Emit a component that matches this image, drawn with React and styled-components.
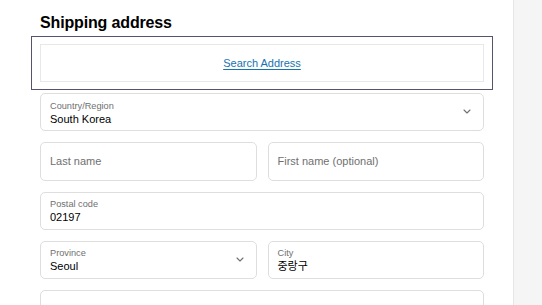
import React from 'react';
import styled, { createGlobalStyle } from 'styled-components';

const GlobalStyle = createGlobalStyle`
    html, body {
        margin: 0;
        padding: 0;
        background: #ffffff;
    }
    body {
        font-family: "Liberation Sans", Arial, "Noto Sans CJK KR", sans-serif;
        color: #000000;
    }
`;

const Page = styled.div`
    display: flex;
    height: 100vh;
    overflow: hidden;
`;

const Main = styled.main`
    flex: 0 0 513px;
    box-sizing: border-box;
    padding: 13px 29px 0 40px;
`;

const Aside = styled.aside`
    flex: 1;
    background: #f5f5f5;
    border-left: 1px solid #e6e6e6;
`;

const Heading = styled.h2`
    margin: 0 0 3px;
    font-size: 16px;
    line-height: 20px;
    font-weight: 700;
    letter-spacing: -0.15px;
`;

const SearchFrame = styled.div`
    margin: 0 -9px 3px -9px;
    padding: 7px 8px;
    border: 1px solid #56536c;
`;

const SearchBox = styled.div`
    height: 36px;
    border: 1px solid #e8e8e8;
    display: flex;
    align-items: center;
    justify-content: center;
`;

const SearchLink = styled.a`
    font-size: 11px;
    color: #1773b0;
    text-decoration: underline;
    text-underline-offset: 2px;
    cursor: pointer;
`;

const Form = styled.div`
    display: grid;
    gap: 11px;
`;

const Row = styled.div`
    display: grid;
    grid-template-columns: 1fr 1fr;
    gap: 11px;
`;

const Field = styled.div`
    position: relative;
    box-sizing: border-box;
    height: 38.25px;
    border: 1px solid #dedede;
    border-radius: 5px;
    padding: ${p => (p.$labelled ? '2px 9px 0' : '0 9px')};
    display: flex;
    flex-direction: column;
    justify-content: center;
`;

const Label = styled.span`
    font-size: 9.2px;
    line-height: 11px;
    margin-bottom: 1px;
    color: #707070;
`;

const Value = styled.span`
    font-size: 11px;
    line-height: 13px;
    color: ${p => (p.$placeholder ? '#707070' : '#000000')};
`;

const Chevron = styled.svg`
    position: absolute;
    right: 12px;
    top: 50%;
    margin-top: -3px;
`;

const SelectArrow = () => (
    <Chevron width="8" height="5" viewBox="0 0 8 5">
        <path d="M1 1l3 3 3-3" fill="none" stroke="#707070" strokeWidth="1.1" strokeLinecap="round" strokeLinejoin="round" />
    </Chevron>
);

const App = () => {
    return (
        <Page>
            <GlobalStyle />
            <Main>
                <Heading>Shipping address</Heading>
                <SearchFrame>
                    <SearchBox>
                        <SearchLink>Search Address</SearchLink>
                    </SearchBox>
                </SearchFrame>
                <Form>
                    <Field $labelled>
                        <Label>Country/Region</Label>
                        <Value>South Korea</Value>
                        <SelectArrow />
                    </Field>
                    <Row>
                        <Field>
                            <Value $placeholder>Last name</Value>
                        </Field>
                        <Field>
                            <Value $placeholder>First name (optional)</Value>
                        </Field>
                    </Row>
                    <Field $labelled>
                        <Label>Postal code</Label>
                        <Value>02197</Value>
                    </Field>
                    <Row>
                        <Field $labelled>
                            <Label>Province</Label>
                            <Value>Seoul</Value>
                            <SelectArrow />
                        </Field>
                        <Field $labelled>
                            <Label>City</Label>
                            <Value>중랑구</Value>
                        </Field>
                    </Row>
                    <Field $labelled>
                        <Label>Address</Label>
                        <Value></Value>
                    </Field>
                </Form>
            </Main>
            <Aside />
        </Page>
    );
};

export default App;
